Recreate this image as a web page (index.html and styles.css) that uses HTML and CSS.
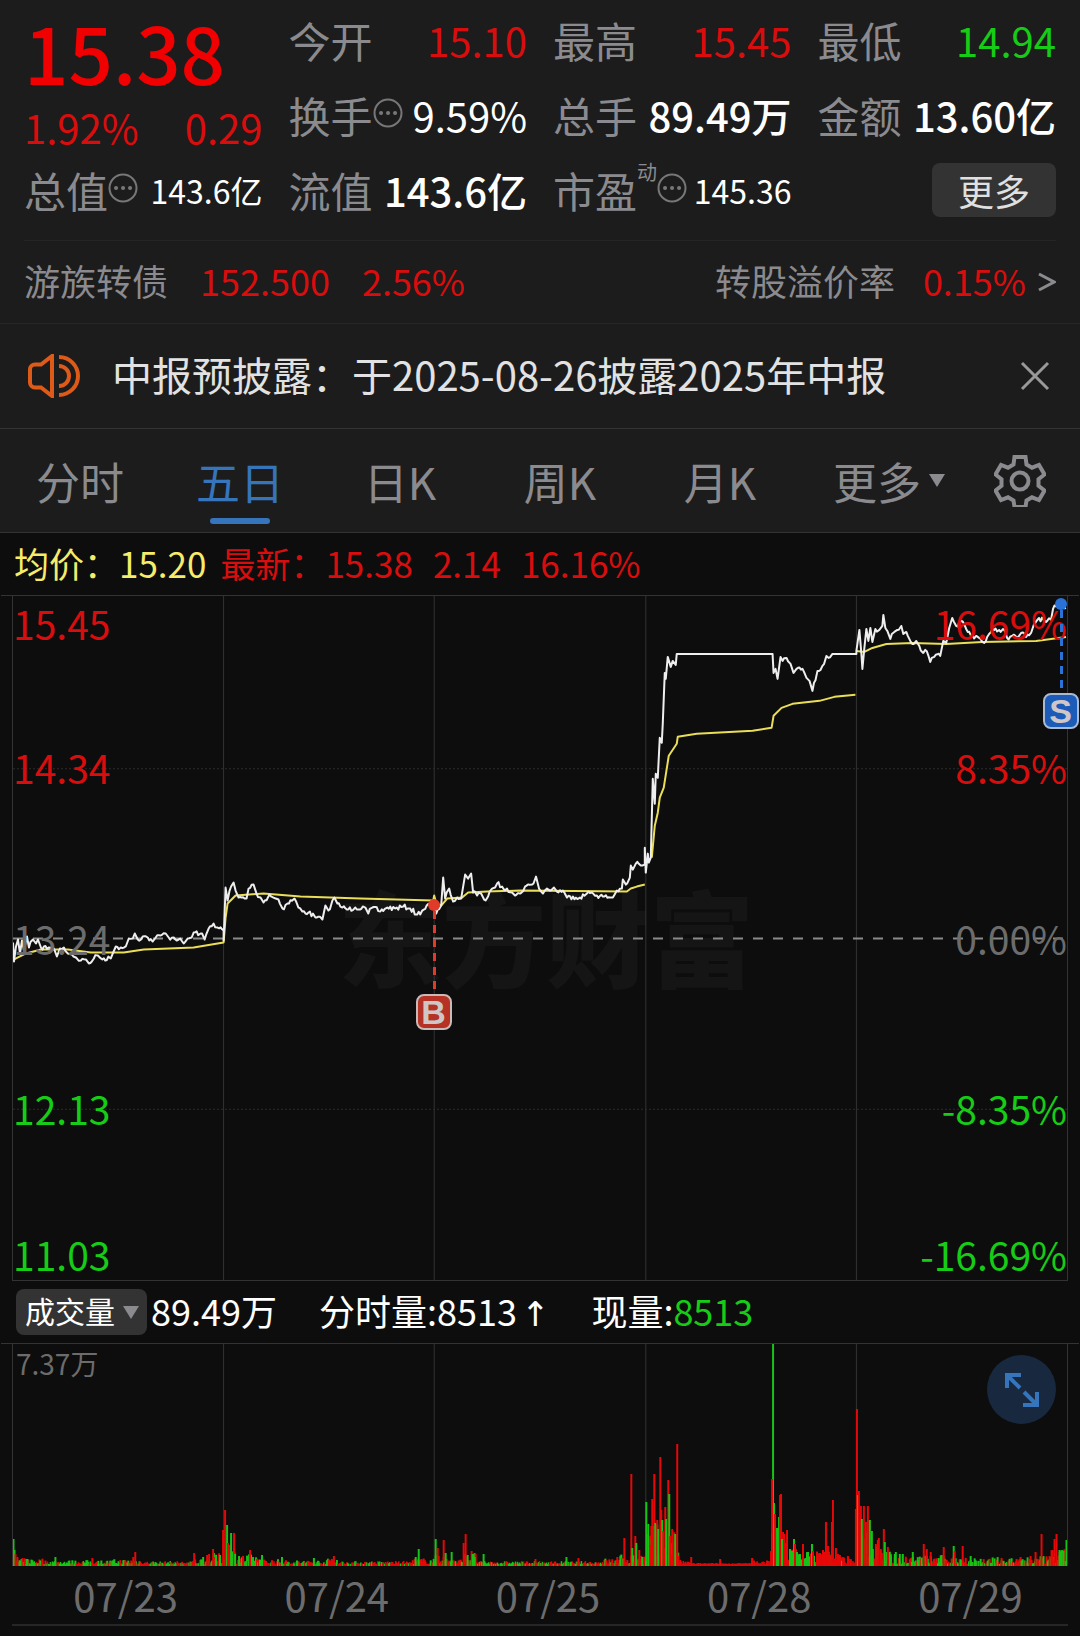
FILE: index.html
```html
<!DOCTYPE html>
<html lang="zh-CN">
<head>
  <meta charset="UTF-8">
  <meta name="viewport" content="width=device-width, initial-scale=1.0">
  <title>行情</title>
  <link rel="stylesheet" href="styles.css">
</head>
<body>

  <!-- Quote -->
  <header class="quote">
    <div class="price-block">
      <div class="price">15.38</div>
      <div class="change"><span>1.92%</span><span>0.29</span></div>
    </div>
    <div class="cell"><span class="label">今开</span><span class="value up">15.10</span></div>
    <div class="cell"><span class="label">最高</span><span class="value up">15.45</span></div>
    <div class="cell"><span class="label">最低</span><span class="value down">14.94</span></div>
    <div class="cell">
      <span class="label">换手</span>
      <svg class="dots" viewBox="0 0 30 30"><circle cx="15" cy="15" r="13.5"/><path d="M8 15h.1M15 15h.1M22 15h.1"/></svg>
      <span class="value">9.59%</span>
    </div>
    <div class="cell"><span class="label">总手</span><span class="value strong">89.49万</span></div>
    <div class="cell"><span class="label">金额</span><span class="value strong">13.60亿</span></div>
    <div class="cell">
      <span class="label">总值</span>
      <svg class="dots" viewBox="0 0 30 30"><circle cx="15" cy="15" r="13.5"/><path d="M8 15h.1M15 15h.1M22 15h.1"/></svg>
      <span class="value small">143.6亿</span>
    </div>
    <div class="cell"><span class="label">流值</span><span class="value strong">143.6亿</span></div>
    <div class="cell">
      <span class="label">市盈</span><sup>动</sup>
      <svg class="dots" viewBox="0 0 30 30"><circle cx="15" cy="15" r="13.5"/><path d="M8 15h.1M15 15h.1M22 15h.1"/></svg>
      <span class="value small">145.36</span>
    </div>
    <div class="cell cell-more"><button class="more-btn">更多</button></div>
  </header>

  <!-- Convertible bond -->
  <a class="bond" href="#bond">
    <span class="muted">游族转债</span>
    <span class="up">152.500</span>
    <span class="up">2.56%</span>
    <span class="muted bond-rate">转股溢价率</span>
    <span class="up">0.15%</span>
    <svg class="arrow" viewBox="0 0 18 22"><path d="M1 3l15 8-15 8"/></svg>
  </a>

  <!-- Notice -->
  <div class="notice">
    <svg class="speaker" viewBox="0 0 52 44">
      <path d="M24 2v40L13 33.500H7a5 5 0 0 1-5-5v-13a5 5 0 0 1 5-5h6z"/>
      <path d="M31 12a10 10 0 0 1 0 20M31 3a19 19 0 0 1 0 38"/>
    </svg>
    <span class="notice-text">中报预披露：于2025-08-26披露2025年中报</span>
    <button class="close-btn" aria-label="关闭">
      <svg viewBox="0 0 30 30"><path d="M2 2l26 26M28 2L2 28"/></svg>
    </button>
  </div>

  <!-- Tabs -->
  <nav class="tabs">
    <button>分时</button>
    <button class="active">五日</button>
    <button>日K</button>
    <button>周K</button>
    <button>月K</button>
    <button class="menu-tab">更多<i class="caret"></i></button>
    <button class="gear" aria-label="设置">
      <svg viewBox="0 0 52 52">
        <path d="M20.500 2h11l1 7.500 5.500 3.200 7-2.700 5.500 9.500-6 4.700v6.600l6 4.700-5.500 9.500-7-2.700-5.500 3.200-1 6.500h-11l-1-6.500-5.500-3.200-7 2.700-5.500-9.500 6-4.700v-6.600l-6-4.700L7 10l7 2.700 5.500-3.200z"/>
        <circle cx="26" cy="26" r="8.500"/>
      </svg>
    </button>
  </nav>

  <div class="info">
    <span class="avg">均价：15.20</span>
    <span class="up">最新：15.38</span>
    <span class="up">2.14</span>
    <span class="up">16.16%</span>
  </div>

  <!-- Price chart -->
  <div class="chart">
    <div class="watermark">东方财富</div>
    <svg id="priceChart" viewBox="0 0 1056 685" preserveAspectRatio="none">
      <path class="grid" d="M211 0V685M422 0V685M634 0V685M845 0V685"/>
      <path class="grid dotted" d="M0 173H1056M0 514H1056"/>
      <path class="zero" d="M0 343H1056"/>
    </svg>
    <span class="tick t1 up">15.45</span><span class="tick t1 right up">16.69%</span>
    <span class="tick t2 up">14.34</span><span class="tick t2 right up">8.35%</span>
    <span class="tick t3 flat">13.24</span><span class="tick t3 right flat">0.00%</span>
    <span class="tick t4 down">12.13</span><span class="tick t4 right down">-8.35%</span>
    <span class="tick t5 down">11.03</span><span class="tick t5 right down">-16.69%</span>
    <div class="marker buy"><b>B</b></div>
    <div class="marker sell"><b>S</b></div>
  </div>

  <!-- Volume -->
  <div class="volume-bar">
    <label class="picker">
      <select aria-label="指标"><option>成交量</option></select>
      <i class="caret"></i>
    </label>
    <span class="total">89.49万</span>
    <span>分时量:8513<i class="trend">↑</i></span>
    <span>现量:<span class="down">8513</span></span>
  </div>
  <div class="chart volume">
    <svg id="volumeChart" viewBox="0 0 1056 222" preserveAspectRatio="none">
      <path class="grid" d="M211 0V222M422 0V222M634 0V222M845 0V222"/>
    </svg>
    <span class="vol-max">7.37万</span>
    <button class="expand" aria-label="全屏">
      <svg viewBox="0 0 34 34"><path d="M2 15V2h14M2 2l13 13M32 19v13H18M32 32L19 19"/></svg>
    </button>
  </div>
  <div class="dates">
    <span>07/23</span><span>07/24</span><span>07/25</span><span>07/28</span><span>07/29</span>
  </div>

  <script src="chart.js"></script>
</body>
</html>
```
FILE: styles.css
```css
/* Global */
* {
  box-sizing: border-box;
}

body {
  margin: 0;
  background-color: #0d0d0d;
  color: #fff;
  font-family: "Noto Sans CJK SC", sans-serif;
  font-size: 36px;
}

button, select {
  padding: 0;
  border: none;
  background: none;
  color: inherit;
  font: inherit;
  cursor: pointer;
}

svg {
  display: block;
  fill: none;
}

.up { color: #d90d0d; }
.down { color: #16cc16; }
.flat { color: #6c6c6c; }
.muted { color: #8b8b8f; }

/* Quote */
.quote {
  display: grid;
  grid-template-columns: repeat(4, minmax(0, 1fr));
  grid-auto-rows: 75px;
  column-gap: 26px;
  padding: 2px 24px 13px;
  background-color: #1c1c1c;
}

.price-block {
  grid-row: span 2;
  color: #d90d0d;
}

.price {
  height: 98px;
  color: #f00000;
  font-size: 78px;
  font-weight: 500;
  line-height: 98px;
}

.change {
  display: flex;
  justify-content: space-between;
  font-size: 40px;
  line-height: 54px;
}

.cell {
  display: flex;
  align-items: center;
  white-space: nowrap;
}

.label {
  color: #8b8b8f;
  font-size: 42px;
}

.value {
  margin-left: auto;
  font-size: 40px;
}

.value.strong {
  font-weight: 500;
}

.value.small {
  font-size: 32px;
}

.cell sup {
  align-self: flex-start;
  color: #8b8b8f;
  font-size: 20px;
  line-height: 40px;
}

.dots {
  width: 30px;
  height: 30px;
  margin-bottom: 4px;
  stroke: #77777a;
  stroke-width: 2;
}

.dots path {
  stroke-width: 4;
  stroke-linecap: round;
}

.cell-more {
  justify-content: flex-end;
}

.more-btn {
  width: 124px;
  height: 54px;
  border-radius: 8px;
  background-color: #333;
  color: #e0e0e0;
  line-height: 50px;
}

/* Convertible bond */
.bond {
  display: flex;
  align-items: center;
  gap: 32px;
  height: 84px;
  padding: 0 24px 4px;
  border-bottom: 1px solid #272727;
  background: linear-gradient(#252525, #252525) center top / calc(100% - 48px) 1px no-repeat #1c1c1c;
  text-decoration: none;
}

.bond-rate {
  margin-right: -4px;
  margin-left: auto;
}

.arrow {
  width: 18px;
  height: 22px;
  margin-top: 4px;
  margin-left: -20px;
  stroke: #8b8b8f;
  stroke-width: 3;
}

/* Notice */
.notice {
  display: flex;
  align-items: center;
  height: 105px;
  padding: 0 30px 0 28px;
  border-bottom: 1px solid #333;
  background-color: #1c1c1c;
  color: #e2e2e2;
  font-size: 40px;
}

.speaker {
  width: 52px;
  height: 44px;
  stroke: #dd5a18;
  stroke-width: 4;
}

.notice-text {
  flex: 1;
  margin-left: 32px;
  padding-bottom: 4px;
  white-space: nowrap;
}

.close-btn svg {
  width: 30px;
  height: 30px;
  stroke: #999;
  stroke-width: 3;
}

/* Tabs */
.tabs {
  display: flex;
  height: 104px;
  border-bottom: 1px solid #333;
  background-color: #1c1c1c;
  color: #8b8b8f;
  font-size: 44px;
}

.tabs button {
  flex: 4 0 0;
  display: flex;
  justify-content: center;
  align-items: center;
  position: relative;
  white-space: nowrap;
}

.tabs .menu-tab::before {
  content: "";
  width: 18px;
}

.tabs .active {
  color: #3674bb;
}

.tabs .active::after {
  content: "";
  position: absolute;
  bottom: 8px;
  width: 60px;
  height: 6px;
  border-radius: 3px;
  background-color: #3674bb;
}

.caret {
  margin-left: 8px;
  border: 8px solid transparent;
  border-top: 13px solid #8b8b8f;
  border-bottom: 0;
}

.tabs .gear {
  flex: 3 0 0;
}

.gear svg {
  width: 52px;
  height: 52px;
  stroke: #8b8b8f;
  stroke-width: 4;
}

/* Price summary */
.info {
  display: flex;
  align-items: center;
  gap: 20px;
  height: 62px;
  padding-bottom: 4px;
  padding-left: 14px;
  font-size: 35px;
}

.avg {
  margin-right: -6px;
  color: #f7ec6a;
}

/* Charts */
.chart {
  position: relative;
  height: 686px;
  margin: 0 12px;
  border: 1px solid #333;
}

.chart::before {
  content: "";
  position: absolute;
  top: -1px;
  left: -12px;
  right: -12px;
  border-top: 1px solid #333;
}

.chart svg {
  width: 100%;
  height: 100%;
}

.chart path {
  vector-effect: non-scaling-stroke;
}

#priceChart {
  position: relative;
}

.grid { stroke: #333; }
.grid.dotted { stroke: #2c2c2c; stroke-dasharray: 2 2; }
.zero { stroke: #8a8a8a; stroke-width: 2; stroke-dasharray: 10 10; }
.line-price { stroke: #eee; stroke-width: 2; stroke-linejoin: round; }
.line-avg { stroke: #eade58; stroke-width: 2; stroke-linejoin: round; }

.watermark {
  position: absolute;
  inset: 0;
  display: flex;
  justify-content: center;
  align-items: center;
  padding: 0 0 8px 12px;
  color: #151515;
  font-size: 104px;
  font-weight: 900;
}

.tick {
  position: absolute;
  left: 0;
  font-size: 39px;
  line-height: 40px;
  transform: translateY(-50%);
}

.tick.right { left: auto; right: 0; }
.t1 { top: 27px; }
.t2 { top: 171px; }
.t3 { top: 342px; }
.t4 { top: 512px; }
.t5 { top: 658px; }

/* Trade markers */
.marker {
  position: absolute;
  width: 36px;
  border-top: 12px solid transparent;
  transform: translateX(-50%);
}

.marker::before {
  content: "";
  position: absolute;
  top: -12px;
  left: 12px;
  width: 12px;
  height: 12px;
  border-radius: 6px;
  background-color: currentColor;
}

.marker::after {
  content: "";
  position: absolute;
  top: 0;
  left: 17px;
  width: 3px;
  height: 84px;
  background: repeating-linear-gradient(currentColor 0 8px, transparent 8px 14px);
}

.marker b {
  display: block;
  margin-top: 83px;
  border: 2px solid #c9b9b9;
  border-radius: 8px;
  position: relative;
  z-index: 1;
  color: #cfc6c9;
  font-family: "Liberation Sans", sans-serif;
  font-size: 34px;
  line-height: 32px;
  text-align: center;
}

.buy {
  top: 303px;
  left: 39.9%;
  color: #e03a28;
}

.buy b { background-color: #b53224; }

.sell {
  top: 2px;
  left: 99.4%;
  color: #2a72d8;
}

.sell b { border-color: #a9bad3; background-color: #1c5bb8; }

/* Volume */
.volume-bar {
  display: flex;
  align-items: center;
  height: 62px;
  padding-left: 16px;
  white-space: nowrap;
}

.volume-bar > span {
  margin-right: 42px;
  padding-bottom: 4px;
}

.volume-bar .total {
  margin-left: 4px;
}

.trend {
  margin-left: 4px;
  font-family: "DejaVu Sans", sans-serif;
  font-size: 34px;
  font-style: normal;
  line-height: 34px;
}

.picker {
  display: flex;
  align-items: center;
  height: 46px;
  padding: 0 8px 0 9px;
  border-radius: 8px;
  background-color: #333;
}

.picker select {
  appearance: none;
  padding-bottom: 4px;
  font-size: 30px;
  line-height: 42px;
}

.chart.volume {
  height: 223px;
  border-bottom: none;
}

.vol-max {
  position: absolute;
  top: 4px;
  left: 3px;
  color: #6c6c6c;
  font-size: 28px;
  line-height: 30px;
}

.expand {
  position: absolute;
  top: 11px;
  right: 11px;
  display: flex;
  justify-content: center;
  align-items: center;
  width: 69px;
  height: 69px;
  border-radius: 50%;
  background-color: #18293f;
}

.expand svg {
  width: 34px;
  height: 34px;
  stroke: #3674bb;
  stroke-width: 4;
}

.dates {
  display: flex;
  height: 60px;
  margin: 0 12px;
  border-bottom: 2px solid #262626;
  color: #6c6c6c;
  font-size: 40px;
  line-height: 58px;
  text-align: center;
}

.dates span {
  flex: 1;
  padding-left: 16px;
}
```
FILE: chart.js
```js
// intraday points, "x,y" in viewBox units
const price = `0,347 1,366 3,351 5,344 7,358 9,345 11,355 14,341 16,352 20,344 23,348 25,344 28,352 36,352 41,353 44,361 47,353 51,352 55,358 59,359 63,362 68,365 73,364 76,368 81,363 85,360 88,363 98,363 100,358 103,351 108,352 113,351 116,343 120,343 122,338 125,344 130,341 135,342 140,346 143,342 148,340 153,338 156,342 161,342 166,344 171,348 175,343 179,342 181,337 188,338 192,344 196,333 201,328 205,332 211,335
211,345 213,292 215,305 217,295 221,287 223,295 226,302 234,303 236,293 241,289 244,298 248,302 251,307 257,299 261,302 266,304 270,313 275,308 282,303 286,312 290,316 296,317 303,322 310,324 313,310 316,315 320,305 322,302 325,308 330,312 336,314 343,312 353,312 356,318 360,312 368,316 375,312 383,313 391,311 398,313 405,319 410,315 418,308 420,310 422,308
424,318 429,310 431,282 433,303 437,293 441,306 445,302 449,303 453,279 456,283 459,278 461,297 465,300 469,298 472,304 476,301 480,293 485,288 490,291 495,293 500,297 503,300 508,298 513,291 520,289 524,281 527,293 531,298 535,293 538,295 542,292 545,296 551,295 555,302 561,301 568,302 575,298 580,297 585,300 591,301 601,302 605,295 610,293 611,284 614,289 618,282 619,270 621,274 624,268 629,270 633,269
633,252 634,277 636,258 637,267 639,262 641,183 643,208 644,178 646,182 648,142 650,147 651,128 653,77 654,83 656,61 659,71 661,65 664,69 665,58 761,58 762,77 764,73 766,83 769,61 771,65 775,62 779,68 782,77 785,73 791,73 795,82 798,85 801,95 806,75 811,70 815,60 817,62 821,58 838,58 845,58
845,55 848,34 850,58 851,73 853,52 855,33 857,45 859,32 861,46 864,33 868,34 871,30 872,19 874,32 876,35 879,43 883,36 886,34 890,30 892,38 895,36 899,45 901,48 905,45 908,50 912,57 914,54 919,66 923,61 929,60 932,45 935,47 938,32 941,22 945,30 950,25 955,33 960,40 965,40 968,42 973,47 978,38 983,34 988,34 992,33 996,42 1001,40 1006,42 1010,37 1015,41 1020,37 1023,28 1028,22 1035,26 1040,24 1042,13 1049,8 1055,12`;

const average = [
  '1,364 3,363 13,358 28,354 55,354 78,357 111,357 131,354 181,352 211,347 213,322 215,308 223,300 251,298 288,301 348,303 421,305 422,300 424,308 429,310 435,303 450,302 456,297 475,296 508,295 615,296 619,293 625,291 633,289',
  '640,262 643,230 646,217 648,202 652,192 657,160 665,148 666,141 685,138 741,135 760,132 762,120 770,112 781,108 808,105 823,101 844,99',
  '845,55 853,56 861,52 875,48 901,47 935,48 971,46 1025,45 1055,41'
];

// volume peaks, "x,height,r|g"
const peaks = `0,27,g 1,16,g 2,12,r 4,9,r 14,7,g 42,9,g 79,8,r 122,14,r 120,9,r 181,13,r 190,9,g 194,11,r 196,12,r 200,17,r 203,11,g 207,11,g
210,36,r 212,56,r 214,41,g 215,23,r 217,21,r 218,33,g 221,33,r 222,12,g 226,10,g 230,9,r 237,16,r 240,9,g 249,11,g 269,9,g 301,8,g 321,10,r 319,7,r 403,9,g 406,17,g
423,27,g 425,18,r 426,10,r 431,26,r 433,13,g 439,14,g 451,23,r 453,32,r 455,11,g 459,15,r 460,12,g 462,9,g 471,12,g 523,7,r 554,9,g 566,8,r 605,9,r 612,28,r 619,92,r 620,18,g 623,30,r 624,23,g 627,16,r 630,9,g
634,64,g 636,42,g 638,21,r 639,40,r 640,67,r 642,92,r 643,43,g 645,46,r 646,37,g 648,109,r 649,56,r 650,46,g 651,35,r 653,59,r 654,47,g 656,86,r 657,72,g 658,30,r 660,37,r 662,24,r 663,32,g 665,122,r 666,10,r 668,6,r 679,9,r 708,7,r 740,8,r 759,15,r
760,87,r 762,63,g 763,52,r 765,38,g 767,49,g 768,71,r 769,72,r 770,27,g 772,32,r 774,23,r 775,36,r 778,17,g 780,15,g 782,27,g 783,22,r 785,14,g 788,12,g 791,22,r 796,14,g 800,22,g 801,15,r 808,13,r 811,16,r 814,44,r 816,20,r 820,44,r 821,66,r 824,18,r 826,12,r 828,11,r 836,10,r
844,57,r 845,157,r 846,71,g 847,75,r 849,60,r 850,47,g 852,60,r 854,44,r 856,60,r 858,46,g 860,35,g 861,17,g 864,22,r 866,26,r 867,28,r 869,17,r 872,37,r 873,24,g 875,14,g 876,19,r 879,10,g 883,12,g 888,12,g 891,12,g 901,14,g 912,22,r 915,17,r 919,14,r 932,19,r 942,20,g 943,15,r 951,20,r 959,10,g 990,8,r 1019,10,r 1024,14,r 1030,32,r 1038,10,r 1041,16,r 1043,27,r 1045,32,r 1048,16,g 1050,15,g 1052,15,g 1055,26,g`;

// usual height of the small bars from x on, and share of red ones
const floor = [
  [0, 6, 0.5], [30, 4, 0.5], [100, 5, 0.5], [130, 3, 0.6], [180, 6, 0.5], [200, 11, 0.5],
  [214, 20, 0.6], [223, 10, 0.5], [250, 5, 0.6], [270, 4, 0.5], [315, 7, 0.8], [325, 3, 0.7],
  [400, 6, 0.8], [423, 9, 0.5], [440, 5, 0.5], [451, 12, 0.6], [465, 3, 0.5], [590, 6, 0.6],
  [608, 10, 0.7], [625, 12, 0.6], [634, 40, 0.6], [663, 12, 0.8], [667, 3, 1], [680, 1, 1],
  [740, 4, 1], [760, 34, 0.6], [772, 20, 0.5], [785, 14, 0.4], [805, 14, 0.8], [828, 8, 0.8],
  [840, 4, 1], [845, 46, 0.7], [858, 24, 0.6], [872, 13, 0.5], [890, 9, 0.4], [930, 9, 0.5],
  [955, 7, 0.4], [1015, 8, 0.6], [1040, 15, 0.5]
];

let seed = 7;
function random() {
  seed = (seed * 16807) % 2147483647;
  return seed / 2147483647;
}

function addPath(svg, className, d) {
  const path = document.createElementNS('http://www.w3.org/2000/svg', 'path');
  path.setAttribute('class', className);
  path.setAttribute('d', d);
  svg.appendChild(path);
  return path;
}

// adds minute-level wobble between two points
function wobble(points) {
  const out = [];
  points.forEach(([x, y], i) => {
    out.push([x, y]);
    const next = points[i + 1];
    if (!next || next[0] - x < 4 || next[0] - x > 12 || x > 820 && x < 845) return;
    for (let s = x + 1.5; s < next[0] - 1; s += 1.5) {
      const base = y + (next[1] - y) * (s - x) / (next[0] - x);
      out.push([s, base + (random() - 0.5) * 5]);
    }
  });
  return out;
}

const priceSvg = document.getElementById('priceChart');
average.forEach(line => addPath(priceSvg, 'line-avg', 'M' + line));
const points = price.split('\n').map(day => wobble(day.trim().split(' ').map(p => p.split(',').map(Number))));
addPath(priceSvg, 'line-price', 'M' + points.flat().join(' '));

const volumeSvg = document.getElementById('volumeChart');
function bar(x, height, color) {
  const path = addPath(volumeSvg, 'bar', `M${x + 0.5} 222V${222 - height}`);
  path.setAttribute('stroke', color === 'r' ? '#e60808' : '#16c416');
  path.setAttribute('stroke-width', height > 5 ? 2 : 1.5);
}

bar(761, 222, 'g');
for (let x = 0; x < 1056; x++) {
  const [, height, red] = floor.filter(f => f[0] <= x).pop();
  bar(x, 2 + height * random() ** 1.4, random() < red ? 'r' : 'g');
}
for (const peak of peaks.split(/\s+/)) {
  const [x, height, color] = peak.split(',');
  bar(Number(x), Number(height), color);
}
```
